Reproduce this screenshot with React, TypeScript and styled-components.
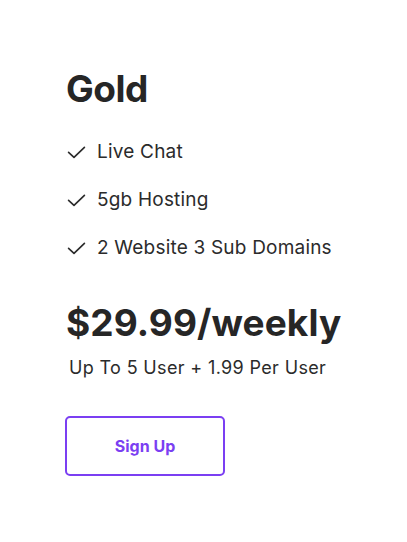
import React from "react";
import styled, { createGlobalStyle } from "styled-components";

const GlobalStyle = createGlobalStyle`
  body {
    margin: 0;
    background: #fff;
    font-family: "Inter", "Liberation Sans", sans-serif;
  }
`;

const features = ["Live Chat", "5gb Hosting", "2 Website 3 Sub Domains"];

function CheckIcon() {
  return (
    <svg width="21" height="20" viewBox="0 0 24 24" fill="none" stroke="#2b2b2b" strokeWidth="2" strokeLinecap="round" strokeLinejoin="round">
      <path d="M2.5 12.5l6.5 6L21.5 6.5" />
    </svg>
  );
}

function App() {
  return (
    <>
      <GlobalStyle />
      <Card>
        <PlanName>Gold</PlanName>
        <FeatureList>
          {features.map((f) => (
            <Feature key={f}>
              <CheckIcon />
              <span>{f}</span>
            </Feature>
          ))}
        </FeatureList>
        <Price>$29.99/weekly</Price>
        <PriceNote>Up To 5 User + 1.99 Per User</PriceNote>
        <SignUpButton>Sign Up</SignUpButton>
      </Card>
    </>
  );
}

export default App;

const Card = styled.div`
  width: 407px;
  height: 542px;
  box-sizing: border-box;
  padding: 66px 0 0 66px;
  display: flex;
  flex-direction: column;
  align-items: flex-start;
  color: #262626;
`;

const PlanName = styled.h2`
  margin: 0;
  font-size: 37px;
  font-weight: 700;
  line-height: 46px;
  letter-spacing: -0.5px;
`;

const FeatureList = styled.ul`
  list-style: none;
  margin: 27px 0 0;
  padding: 0;
  display: flex;
  flex-direction: column;
  gap: 22px;
`;

const Feature = styled.li`
  display: flex;
  align-items: center;
  gap: 10px;
  font-size: 19px;
  line-height: 26px;
  font-weight: 400;
  letter-spacing: 0.2px;
  color: #2b2b2b;
`;

const Price = styled.div`
  margin-top: 40px;
  font-size: 37px;
  font-weight: 700;
  line-height: 44px;
  letter-spacing: 0.1px;
`;

const PriceNote = styled.div`
  margin: 10px 0 0 3px;
  font-size: 18px;
  line-height: 26px;
  letter-spacing: 0.35px;
  color: #2b2b2b;
`;

const SignUpButton = styled.button`
  margin: 35px 0 0 -1px;
  width: 160px;
  height: 60px;
  box-sizing: border-box;
  border: 2px solid #7b3ff2;
  border-radius: 5px;
  background: #fff;
  color: #7b3ff2;
  font-family: "Inter", "Liberation Sans", sans-serif;
  font-size: 16px;
  font-weight: 700;
  cursor: pointer;
`;
